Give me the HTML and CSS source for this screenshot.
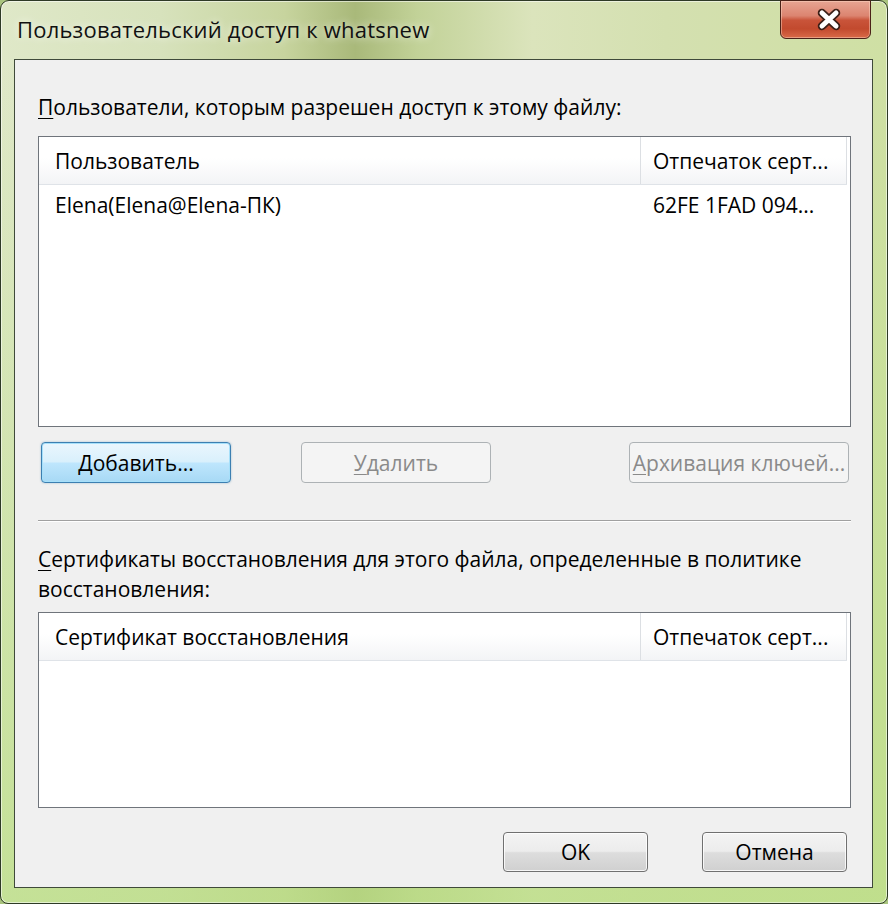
FILE: index.html
```html
<!DOCTYPE html>
<html lang="ru">
<head>
    <meta charset="UTF-8">
    <title>Пользовательский доступ к whatsnew</title>
    <link rel="stylesheet" href="styles.css">
</head>
<body>
    <div class="window">
        <!-- Title bar -->
        <div class="titlebar">
            <span class="title">Пользовательский доступ к whatsnew</span>
            <button class="close" aria-label="Закрыть">
                <svg width="28" height="24" viewBox="0 0 28 24">
                    <path d="M7 5 L21 18 M21 5 L7 18" stroke="#3b1f17" stroke-width="8.5" stroke-linecap="round"/>
                    <path d="M7 5 L21 18 M21 5 L7 18" stroke="#ffffff" stroke-width="5" stroke-linecap="round"/>
                </svg>
            </button>
        </div>

        <div class="client">
            <p class="label"><u>П</u>ользователи, которым разрешен доступ к этому файлу:</p>

            <div class="list list-users">
                <div class="list-head">
                    <div class="col col-name">Пользователь</div>
                    <div class="col col-print">Отпечаток серт...</div>
                </div>
                <div class="list-row">
                    <div class="col col-name">Elena(Elena@Elena-ПК)</div>
                    <div class="col col-print">62FE 1FAD 094...</div>
                </div>
            </div>

            <div class="actions">
                <button class="btn btn-focus btn-add">Добавить...</button>
                <button class="btn btn-remove" disabled><u>У</u>далить</button>
                <button class="btn btn-backup" disabled><u>А</u>рхивация ключей...</button>
            </div>

            <div class="sep"></div>

            <p class="label label-wrap">
                <span class="line"><u>С</u>ертификаты восстановления для этого файла, определенные в политике</span>
                <span class="line">восстановления:</span>
            </p>

            <div class="list list-recovery">
                <div class="list-head">
                    <div class="col col-name">Сертификат восстановления</div>
                    <div class="col col-print">Отпечаток серт...</div>
                </div>
            </div>

            <div class="footer">
                <button class="btn btn-dlg">OK</button>
                <button class="btn btn-dlg">Отмена</button>
            </div>
        </div>
    </div>
</body>
</html>
```

FILE: styles.css
```css
* {
    margin: 0;
    padding: 0;
    box-sizing: border-box;
}

body {
    width: 888px;
    height: 904px;
    overflow: hidden;
    background: #a9c47e;
    font-family: "Open Sans", "Liberation Sans", sans-serif;
    color: #000;
}

/* Window frame */
.window {
    width: 888px;
    height: 904px;
    border: 1px solid #2e3a26;
    border-radius: 9px 9px 8px 8px;
    padding: 0 14px 15px 13px;
    display: flex;
    flex-direction: column;
    background:
        linear-gradient(to bottom, rgba(255, 255, 255, 0) 0, rgba(255, 255, 255, 0) 60px, rgba(185, 222, 130, 0.7) 100%),
        linear-gradient(to right, #dfe8c8 0%, #d7e2bc 18%, #c7d49e 32%, #a9b97a 40%, #c2d298 47%, #dbe4bc 60%, #d4e0b0 75%, #cfe0a4 100%);
    box-shadow: inset 0 0 0 1px rgba(255, 255, 255, 0.55);
}

.titlebar {
    height: 58px;
    display: flex;
    align-items: flex-start;
    justify-content: space-between;
}

.title {
    padding: 13px 0 0 3px;
    font-size: 22px;
    letter-spacing: 0.2px;
    color: #111;
    text-shadow: 0 0 8px rgba(255, 255, 255, 0.9);
}

.close {
    width: 91px;
    height: 39px;
    margin-top: -1px;
    margin-right: 2px;
    border: 1px solid #4a2218;
    border-radius: 0 0 6px 6px;
    background: linear-gradient(to bottom, #e7a593 0%, #dc8470 40%, #c9543a 52%, #c24a2e 75%, #d96a48 100%);
    box-shadow: inset 0 0 0 1px rgba(255, 220, 200, 0.45);
    display: flex;
    align-items: center;
    justify-content: center;
    padding-left: 6px;
}

.close svg {
    display: block;
}

/* Client area */
.client {
    flex: 1;
    background: #f0f0f0;
    border: 1px solid #3f4a3a;
    padding: 32px 21px 0 23px;
    display: flex;
    flex-direction: column;
    font-size: 21px;
}

.label {
    line-height: 30px;
}

.label u,
.btn u {
    text-decoration-thickness: 1px;
    text-underline-offset: 3px;
}

.label-wrap {
    margin-top: 22px;
}

.line {
    display: block;
}

/* List views */
.list {
    background: #fff;
    border: 1px solid #6f747b;
}

.list-users {
    height: 291px;
    margin-top: 14px;
}

.list-recovery {
    height: 196px;
    margin-top: 8px;
}

.list-head {
    display: flex;
    height: 48px;
    width: 808px;
    border-bottom: 1px solid #dfe3e8;
    background: linear-gradient(to bottom, #ffffff 0%, #ffffff 45%, #f3f4f6 100%);
}

.list-head .col {
    border-right: 1px solid #dcdfe3;
}

.list-row {
    display: flex;
    height: 40px;
}

.col {
    display: flex;
    align-items: center;
    white-space: nowrap;
    overflow: hidden;
}

.col-name {
    width: 602px;
    padding-left: 16px;
}

.col-print {
    width: 206px;
    padding-left: 12px;
}

/* Buttons */
.btn {
    height: 41px;
    font-family: inherit;
    font-size: 21px;
    color: #000;
    border: 1px solid #707070;
    border-radius: 4px;
    background: linear-gradient(to bottom, #f4f4f4 0%, #ececec 48%, #dddddd 52%, #d0d0d0 100%);
    box-shadow: inset 0 0 0 1px rgba(255, 255, 255, 0.8);
    white-space: nowrap;
    overflow: hidden;
}

.btn:disabled {
    color: #8a8a8a;
    border-color: #adb2b5;
    background: #f4f4f4;
    box-shadow: none;
}

.btn-focus {
    border-color: #3c7fb1;
    background: linear-gradient(to bottom, #eaf6fd 0%, #d9f0fc 48%, #bee6fd 52%, #a7d9f5 100%);
    box-shadow: inset 0 0 0 1px #a6e0fa, 0 0 2px rgba(60, 127, 177, 0.5);
}

.actions {
    display: flex;
    margin-top: 15px;
    padding: 0 2px 0 3px;
}

.btn-add,
.btn-remove {
    width: 190px;
}

.btn-remove {
    margin-left: 70px;
}

.btn-backup {
    width: 220px;
    margin-left: auto;
    padding: 0 2px;
}

.sep {
    margin-top: 37px;
    height: 2px;
    border-top: 1px solid #a0a0a0;
    border-bottom: 1px solid #ffffff;
}

.footer {
    display: flex;
    justify-content: flex-end;
    gap: 54px;
    margin-top: 24px;
    padding-right: 4px;
}

.btn-dlg {
    width: 145px;
    height: 40px;
}
```
